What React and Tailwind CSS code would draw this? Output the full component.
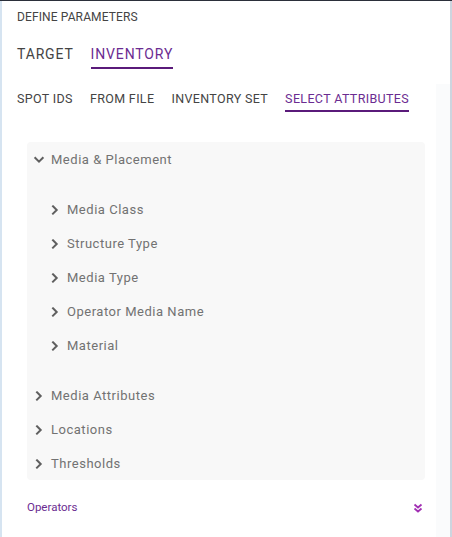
import React from "react";

const Chevron = ({ down = false }) => (
  <svg
    width="12"
    height="12"
    viewBox="0 0 12 12"
    className="shrink-0"
    fill="none"
    stroke="#5f5f5f"
    strokeWidth="2"
    strokeLinecap="square"
  >
    {down ? <path d="M2.3 4 L6 7.7 L9.7 4" /> : <path d="M4 2.3 L7.7 6 L4 9.7" />}
  </svg>
);

const Row = ({ label, down, indent }) => (
  <div className={`flex h-[34px] items-center gap-[6px] pt-[1px] ${indent ? "pl-[22px]" : "pl-[6px]"}`}>
    <Chevron down={down} />
    <span className="text-[13px] tracking-[0.04em] text-[#727272]">{label}</span>
  </div>
);

const App = () => {
  return (
    <div
      className="flex h-[537px] w-[452px] border-t border-[#2b2f3a] bg-white"
      style={{ fontFamily: "Roboto, 'Liberation Sans', sans-serif" }}
    >
      <div className="w-[2px] bg-[#d6e4f1]" />
      <div className="flex-1 pl-[15px]">
        <div className="flex h-[31px] items-center text-[12px] tracking-[0.01em] text-[#444]">DEFINE PARAMETERS</div>
        <div className="flex h-[37px] gap-[17px] text-[14px] tracking-[0.06em]">
          <div className="flex items-end pb-[4px] text-[#444]">TARGET</div>
          <div className="flex items-end border-b-2 border-[#5a1a7a] pb-[2px] text-[#6b2c91]">INVENTORY</div>
        </div>
        <div className="mt-[20px] flex h-[23px] gap-[17px] text-[12.5px] tracking-[0.028em]">
          <div className="flex items-center pb-[2px] text-[#444]">SPOT IDS</div>
          <div className="flex items-center pb-[2px] text-[#444]">FROM FILE</div>
          <div className="flex items-center pb-[2px] text-[#444]">INVENTORY SET</div>
          <div className="flex items-center border-b-2 border-[#5a1a7a] text-[#6b2c91]">SELECT ATTRIBUTES</div>
        </div>
        <div className="ml-[10px] mt-[30px] w-[398px] rounded-[4px] bg-[#f8f8f8]">
          <Row label="Media & Placement" down />
          <div className="h-[16px]" />
          <Row label="Media Class" indent />
          <Row label="Structure Type" indent />
          <Row label="Media Type" indent />
          <Row label="Operator Media Name" indent />
          <Row label="Material" indent />
          <div className="h-[16px]" />
          <Row label="Media Attributes" />
          <Row label="Locations" />
          <Row label="Thresholds" />
        </div>
        <div className="ml-[10px] flex h-[56px] w-[398px] items-center justify-between pr-[2px]">
          <span className="text-[11.5px] text-[#6b2c91]">Operators</span>
          <svg width="10" height="10" viewBox="0 0 10 10" fill="none" stroke="#a12fb3" strokeWidth="1.8">
            <path d="M1.5 1.5 L5 4.5 L8.5 1.5" />
            <path d="M1.5 5.5 L5 8.5 L8.5 5.5" />
          </svg>
        </div>
      </div>
      <div className="flex w-[16px] flex-col border-r-2 border-[#cdd5df]">
        <div className="h-[83px]" />
        <div className="flex-1 bg-[#fafbfc]" />
      </div>
    </div>
  );
};

export default App;
